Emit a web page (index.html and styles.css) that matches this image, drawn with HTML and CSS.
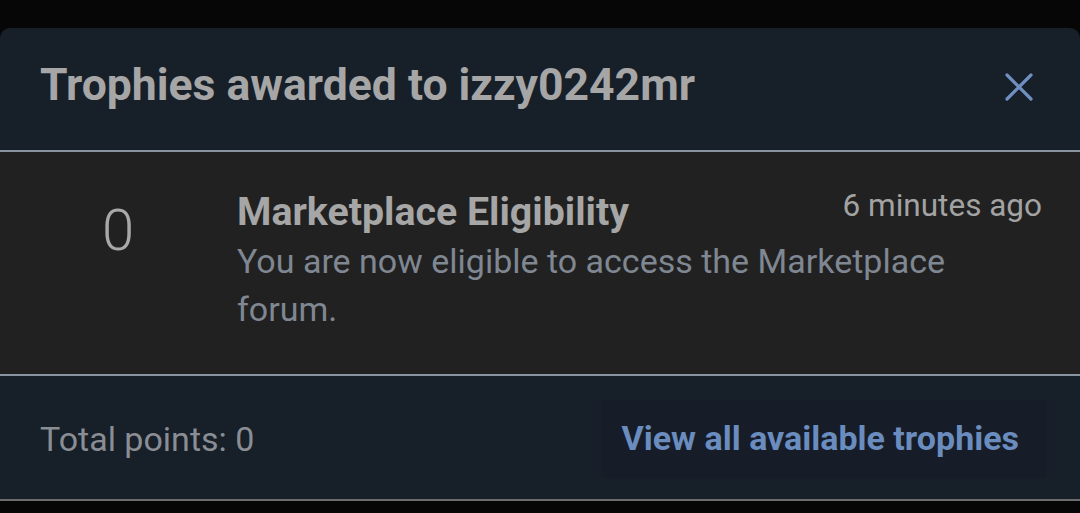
FILE: index.html
```html
<!DOCTYPE html>
<html>
<head>
<meta charset="utf-8">
<link rel="stylesheet" href="styles.css">
</head>
<body>
<div class="dialog">
  <div class="header">
    <h1 class="title">Trophies awarded to izzy0242mr</h1>
    <button class="close" aria-label="Close">
      <svg width="30" height="30" viewBox="0 0 30 30"><path d="M3 3 L27 27 M27 3 L3 27" stroke="#6f8fc0" stroke-width="3.2" stroke-linecap="round" fill="none"/></svg>
    </button>
  </div>
  <div class="list">
    <div class="trophy">
      <div class="points">0</div>
      <div class="info">
        <div class="info-top">
          <div class="name">Marketplace Eligibility</div>
          <div class="time">6 minutes ago</div>
        </div>
        <div class="desc">You are now eligible to access the Marketplace forum.</div>
      </div>
    </div>
  </div>
  <div class="footer">
    <div class="total">Total points: 0</div>
    <a class="view-all" href="#">View all available trophies</a>
  </div>
</div>
</body>
</html>
```

FILE: styles.css
```css
* { box-sizing: border-box; }
html, body { margin: 0; padding: 0; }
body {
  background: #060606;
  font-family: Roboto, "Noto Sans", sans-serif;
  width: 1080px;
  height: 513px;
  overflow: hidden;
  padding-top: 28px;
}
.dialog {
  background: #171f29;
  border-radius: 10px 10px 0 0;
  overflow: hidden;
  border-bottom: 2px solid #6c6c6c;
}
.header {
  height: 124px;
  display: flex;
  align-items: center;
  justify-content: space-between;
  padding: 0 46px 0 40px;
  border-bottom: 2px solid #8894a0;
}
.title {
  margin: 0;
  font-size: 44.5px;
  font-weight: 700;
  color: #a6a6a6;
  line-height: 52px;
  padding-bottom: 8px;
}
.close {
  background: none;
  border: 0;
  padding: 0;
  width: 30px;
  height: 30px;
  display: flex;
  margin-bottom: 4px;
}
.list {
  background: #212121;
  height: 224px;
  border-bottom: 2px solid #8894a0;
}
.trophy {
  display: flex;
  padding: 37px 38px 0 0;
}
.points {
  width: 237px;
  text-align: center;
  font-size: 58px;
  font-weight: 300;
  color: #a8a8a8;
  line-height: 60px;
  padding-top: 11px;
  padding-right: 1px;
}
.info { flex: 1; }
.info-top {
  display: flex;
  justify-content: space-between;
  align-items: flex-start;
}
.name {
  font-size: 39.3px;
  font-weight: 700;
  color: #a6a6a6;
  line-height: 46px;
}
.time {
  font-size: 31.5px;
  color: #a3a3a3;
  line-height: 34px;
  margin-top: 0;
}
.desc {
  font-size: 34px;
  color: #7f8792;
  line-height: 48px;
  max-width: 740px;
  margin-top: 2px;
}
.footer {
  height: 123px;
  display: flex;
  align-items: center;
  justify-content: space-between;
  padding: 0 34px 0 40px;
}
.total {
  font-size: 34px;
  color: #8a8e94;
  padding-top: 2px;
}
.view-all {
  background: #161d28;
  padding: 18px 27px 20px 21px;
  font-size: 34px;
  font-weight: 700;
  color: #6a8cbe;
  text-decoration: none;
  margin-top: 2px;
}
```
